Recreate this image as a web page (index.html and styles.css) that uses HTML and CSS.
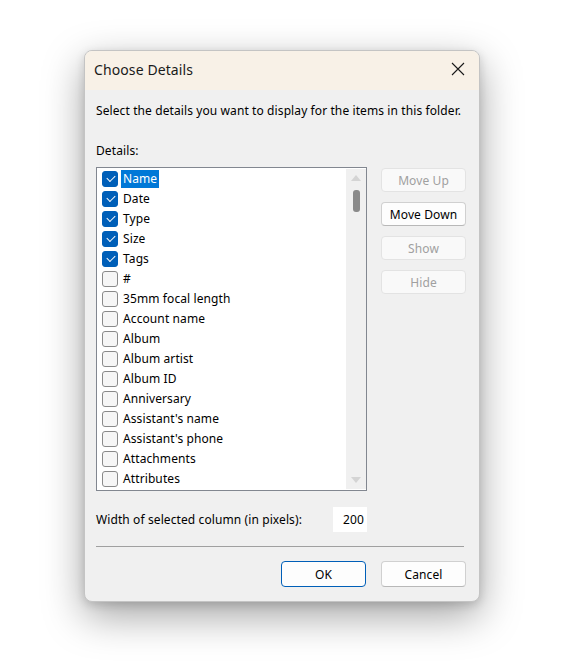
FILE: index.html
```html
<!DOCTYPE html>
<html>
<head>
<meta charset="utf-8">
<link rel="stylesheet" href="styles.css">
</head>
<body>
<div class="page">
  <div class="dialog">
    <div class="titlebar">
      <span class="title">Choose Details</span>
      <svg class="close" width="14" height="14" viewBox="0 0 14 14"><path d="M1 1L13 13M13 1L1 13" stroke="#1a1a1a" stroke-width="1.1" fill="none"/></svg>
    </div>
    <div class="body">
      <p class="intro">Select the details you want to display for the items in this folder.</p>
      <p class="label">Details:</p>
      <div class="main">
        <div class="listbox">
          <ul class="items">
            <li><span class="cb on"></span><span class="txt sel">Name</span></li>
            <li><span class="cb on"></span><span class="txt">Date</span></li>
            <li><span class="cb on"></span><span class="txt">Type</span></li>
            <li><span class="cb on"></span><span class="txt">Size</span></li>
            <li><span class="cb on"></span><span class="txt">Tags</span></li>
            <li><span class="cb"></span><span class="txt">#</span></li>
            <li><span class="cb"></span><span class="txt">35mm focal length</span></li>
            <li><span class="cb"></span><span class="txt">Account name</span></li>
            <li><span class="cb"></span><span class="txt">Album</span></li>
            <li><span class="cb"></span><span class="txt">Album artist</span></li>
            <li><span class="cb"></span><span class="txt">Album ID</span></li>
            <li><span class="cb"></span><span class="txt">Anniversary</span></li>
            <li><span class="cb"></span><span class="txt">Assistant's name</span></li>
            <li><span class="cb"></span><span class="txt">Assistant's phone</span></li>
            <li><span class="cb"></span><span class="txt">Attachments</span></li>
            <li><span class="cb"></span><span class="txt">Attributes</span></li>
          </ul>
          <div class="scrollbar">
            <svg class="arrow" width="10" height="6" viewBox="0 0 10 6"><path d="M0 6L5 0L10 6Z" fill="#d4d4d4"/></svg>
            <div class="thumb"></div>
            <div class="spacer"></div>
            <svg class="arrow" width="10" height="6" viewBox="0 0 10 6"><path d="M0 0L5 6L10 0Z" fill="#d4d4d4"/></svg>
          </div>
        </div>
        <div class="side">
          <button class="btn dis">Move Up</button>
          <button class="btn">Move Down</button>
          <button class="btn dis">Show</button>
          <button class="btn dis">Hide</button>
        </div>
      </div>
      <div class="widthrow">
        <span>Width of selected column (in pixels):</span>
        <span class="num">200</span>
      </div>
      <div class="sep"></div>
      <div class="footer">
        <button class="btn ok">OK</button>
        <button class="btn">Cancel</button>
      </div>
    </div>
  </div>
</div>
</body>
</html>
```

FILE: styles.css
```css
* { box-sizing: border-box; }
html, body { margin: 0; padding: 0; background: #ffffff; }
body { font-family: "Noto Sans", "Open Sans", sans-serif; font-size: 12px; color: #000; letter-spacing: 0.1px; }
.page { padding: 50px 0 60px 84px; }
.dialog {
  width: 396px;
  height: 552px;
  border-radius: 8px;
  background: #f0f0f0;
  border: 1px solid #c4c4c4;
  box-shadow: 0 14px 40px rgba(0,0,0,0.36), 0 3px 10px rgba(0,0,0,0.14);
  overflow: hidden;
}
.titlebar {
  height: 39px;
  background: #f8f1e7;
  display: flex;
  align-items: center;
  justify-content: space-between;
  padding: 0 14px 3px 9px;
}
.title { font-size: 14px; color: #1a1a1a; letter-spacing: 0.1px; }
.close { display: block; }
.body { padding: 0 13px 0 11px; }
.intro { margin: 12px 0 0; line-height: 18px; height: 18px; }
.label { margin: 22px 0 0; line-height: 18px; height: 18px; }
.main { display: flex; gap: 14px; margin-top: 7px; }
.listbox {
  width: 271px;
  height: 324px;
  border: 1px solid #828790;
  background: #fff;
  display: flex;
  padding: 1px 0 1px 0;
}
.items { list-style: none; margin: 0; padding: 0; flex: 1; }
.items li { height: 20px; display: flex; align-items: center; padding-left: 5px; }
.cb {
  width: 16px; height: 16px; border-radius: 3px;
  border: 1px solid #8a8a8a; background: #f6f6f6;
  margin-right: 3px; position: relative; flex: none;
}
.cb.on { background: #005fb8; border-color: #005fb8; }
.cb.on::after {
  content: ""; position: absolute; left: 4px; top: 3px;
  width: 7px; height: 4px;
  border-left: 1.2px solid #fff; border-bottom: 1.2px solid #fff;
  transform: rotate(-45deg);
}
.txt { padding: 0 2px; line-height: 18px; }
.txt.sel { background: #0078d7; color: #fff; }
.scrollbar {
  width: 20px; background: #f0f0f0; margin-right: 0;
  display: flex; flex-direction: column; align-items: center;
  padding: 6px 0 6px;
}
.arrow { display: block; }
.thumb { width: 7px; height: 22px; background: #8a8a8a; border-radius: 3px; margin-top: 9px; }
.spacer { flex: 1; }
.side { display: flex; flex-direction: column; gap: 10px; padding-top: 1px; }
.btn {
  width: 85px; height: 24px;
  font-family: inherit; font-size: 12px; letter-spacing: 0.1px;
  border-radius: 4px; background: #fdfdfd;
  border: 1px solid #d0d0d0; border-bottom-color: #b8b8b8;
  color: #000; padding: 0;
}
.btn.dis { background: #f9f9f9; border-color: #e3e3e3; color: #a0a0a0; }
.widthrow { display: flex; align-items: center; justify-content: space-between; width: 271px; margin-top: 16px; }
.num { width: 34px; height: 25px; background: #fff; text-align: right; padding-right: 3px; line-height: 25px; }
.sep { width: 368px; height: 1px; background: #a0a0a0; margin-top: 14px; }
.footer { display: flex; justify-content: flex-end; gap: 15px; margin-top: 14px; width: 370px; }
.footer .btn { height: 26px; }
.btn.ok { border: 1px solid #005fb8; }
```
